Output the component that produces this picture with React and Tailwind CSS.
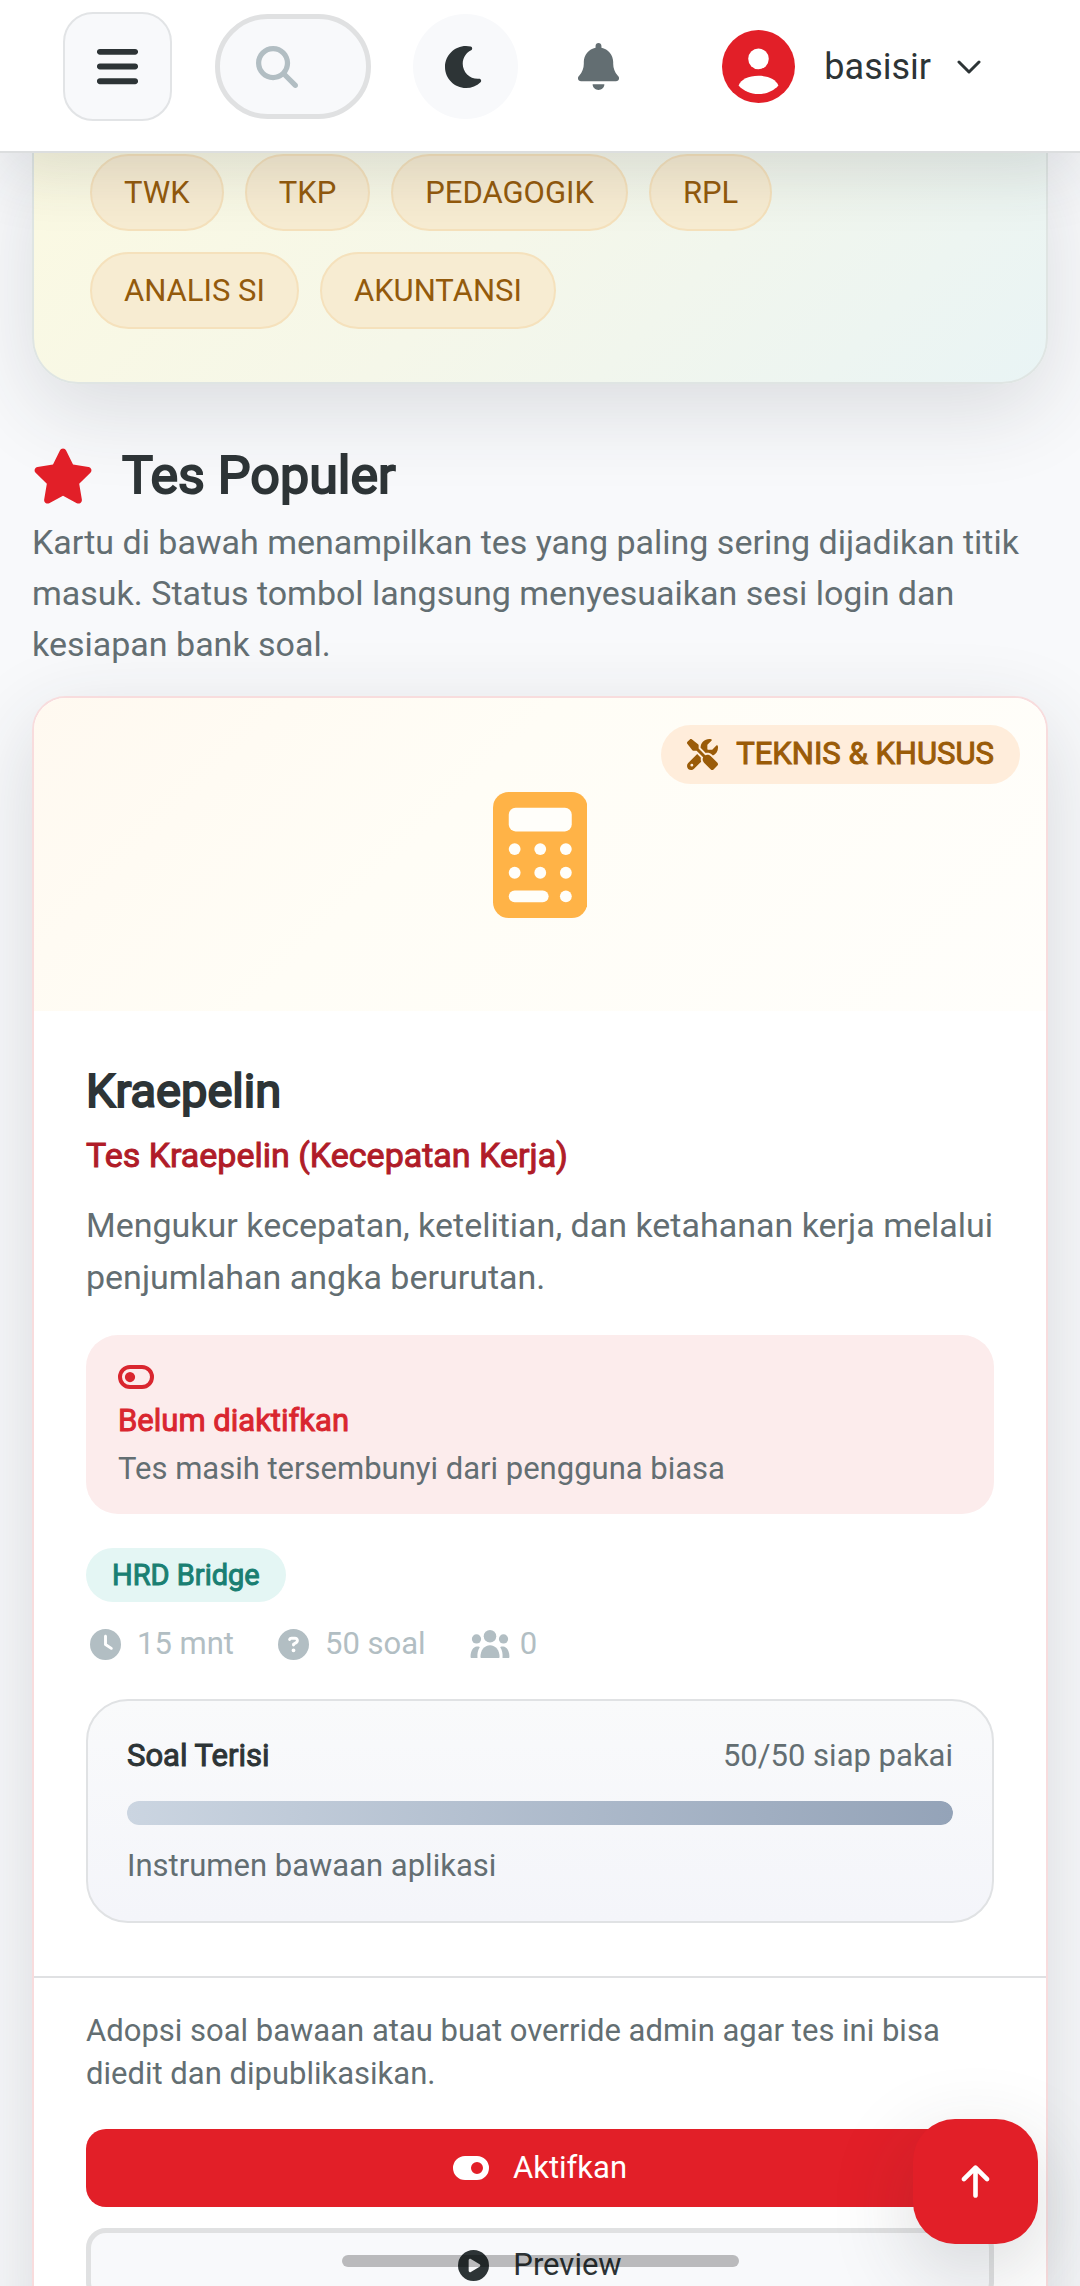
import React, { useRef, useState } from "react";
import {
  FaArrowUp,
  FaBars,
  FaBell,
  FaCirclePlay,
  FaCircleQuestion,
  FaClock,
  FaMagnifyingGlass,
  FaScrewdriverWrench,
  FaStar,
} from "react-icons/fa6";

const CATEGORIES = ["TWK", "TKP", "PEDAGOGIK", "RPL", "ANALIS SI", "AKUNTANSI"];

const TEST = {
  name: "Kraepelin",
  subtitle: "Tes Kraepelin (Kecepatan Kerja)",
  description:
    "Mengukur kecepatan, ketelitian, dan ketahanan kerja melalui penjumlahan angka berurutan.",
  category: "TEKNIS & KHUSUS",
  bridge: "HRD Bridge",
  minutes: 15,
  questions: 50,
  ready: 50,
  users: 0,
};

const MoonIcon = ({ className }) => (
  <svg className={className} viewBox="0 0 512 512" fill="currentColor">
    <path d="M256 0C114.6 0 0 114.6 0 256S114.6 512 256 512c68.8 0 131.3-27.2 177.3-71.4 7.3-7 9.4-17.9 5.3-27.1s-13.7-14.9-23.8-14.1c-4.9 .4-9.8 .6-14.8 .6-101.6 0-184-82.4-184-184 0-72.1 41.5-134.6 102.1-164.8 9.1-4.5 14.3-14.3 13.1-24.4S322.6 8.5 312.7 6.3C294.4 2.2 275.4 0 256 0z" />
  </svg>
);

const AvatarIcon = ({ className }) => (
  <svg className={className} viewBox="0 0 220 220">
    <circle cx="110" cy="110" r="110" fill="currentColor" />
    <circle cx="110" cy="87" r="31" fill="#fff" />
    <path
      d="M50 167c8-18 29-29 60-29s52 11 60 29c-14 16-36 26-60 26s-46-10-60-26z"
      fill="#fff"
    />
  </svg>
);

const CalculatorIcon = ({ className }) => (
  <svg className={className} viewBox="0 0 384 512">
    <rect width="384" height="512" rx="64" fill="currentColor" />
    <g fill="#fffefa">
      <rect x="64" y="64" width="256" height="96" rx="28" />
      <circle cx="88" cy="232" r="24" />
      <circle cx="192" cy="232" r="24" />
      <circle cx="296" cy="232" r="24" />
      <circle cx="88" cy="328" r="24" />
      <circle cx="192" cy="328" r="24" />
      <circle cx="296" cy="328" r="24" />
      <rect x="64" y="400" width="162" height="48" rx="24" />
      <circle cx="296" cy="424" r="24" />
    </g>
  </svg>
);

const ToggleOffIcon = ({ className }) => (
  <svg className={className} viewBox="0 0 576 384">
    <rect
      x="32"
      y="32"
      width="512"
      height="320"
      rx="160"
      fill="none"
      stroke="currentColor"
      strokeWidth="64"
    />
    <circle cx="192" cy="192" r="82" fill="currentColor" />
  </svg>
);

const ToggleOnIcon = ({ className }) => (
  <svg className={className} viewBox="0 0 576 384" fill="currentColor">
    <path
      fillRule="evenodd"
      d="M192 0h192a192 192 0 0 1 0 384H192a192 192 0 0 1 0-384zM384 96a96 96 0 1 0 0 192 96 96 0 0 0 0-192z"
    />
  </svg>
);

const UsersIcon = ({ className }) => (
  <svg className={className} viewBox="0 0 118 85" fill="currentColor">
    <circle cx="59" cy="19" r="19" />
    <circle cx="18" cy="27" r="14" />
    <circle cx="100" cy="27" r="14" />
    <path d="M30 81c0-20 12-35 29-35s29 15 29 35c0 2-1 4-3 4H33c-2 0-3-2-3-4z" />
    <path d="M0 81c0-18 8-30 19-31 4 0 7 0 9 2-6 8-8 19-7 33H3c-2 0-3-2-3-4z" />
    <path d="M118 81c0-18-8-30-19-31-4 0-7 0-9 2 6 8 8 19 7 33h18c2 0 3-2 3-4z" />
  </svg>
);

const Header = () => {
  const [query, setQuery] = useState("");

  return (
    <header className="relative z-10 flex items-center border-b-2 border-[#dcdedf] bg-white pt-3 pr-[99px] pb-[30px] pl-[63px] shadow-[0_20px_64px_rgba(45,52,54,0.14)]">
      <button
        aria-label="Menu"
        className="flex size-[109px] shrink-0 items-center justify-center rounded-[30px] border-2 border-[#e2e4e6] bg-[#f8f9fb]"
      >
        <FaBars className="size-[47px]" />
      </button>
      <label className="ml-[43px] flex h-[105px] min-w-0 flex-1 items-center rounded-full border-[5px] border-[#e0e1e2] bg-[#f8f9fb] pr-4 pl-9">
        <FaMagnifyingGlass className="size-[42px] shrink-0 text-[#b2bec3]" />
        <input
          type="search"
          aria-label="Cari"
          value={query}
          onChange={(e) => setQuery(e.target.value)}
          className="w-0 min-w-0 flex-1 bg-transparent outline-none"
        />
      </label>
      <button
        aria-label="Mode gelap"
        className="ml-[42px] flex size-[105px] shrink-0 items-center justify-center rounded-full bg-[#f8f9fb]"
      >
        <MoonIcon className="size-[42px]" />
      </button>
      <button
        aria-label="Notifikasi"
        className="ml-7 flex size-[105px] shrink-0 items-center justify-center rounded-full text-[#636e72]"
      >
        <FaBell className="size-[47px]" />
      </button>
      <button className="ml-[71px] flex items-center text-[36px]">
        <AvatarIcon className="size-[73px] text-[#e21f28]" />
        <span className="ml-[29px]">basisir</span>
        <svg
          className="ml-[26px] h-4 w-6"
          viewBox="0 0 24 16"
          fill="none"
          stroke="currentColor"
          strokeWidth="3"
          strokeLinecap="round"
          strokeLinejoin="round"
        >
          <path d="M2 3l10 10L22 3" />
        </svg>
      </button>
    </header>
  );
};

const CategoryPanel = () => (
  <section className="flex flex-wrap gap-[21px] rounded-b-[46px] border-2 border-t-0 border-[#dfe5e3] bg-linear-[135deg,#fbf9e2,#f5f7e9_45%,#e9f4f5] px-14 pt-px pb-[53px] shadow-[0_26px_84px_rgba(45,52,54,0.14)]">
    {CATEGORIES.map((category) => (
      <a
        key={category}
        href="#tes"
        className="rounded-full border-2 border-[#f5e1bc] bg-[#f7ecd2] px-8 py-4 text-[31px] leading-[41px] text-[#935a0c]"
      >
        {category}
      </a>
    ))}
  </section>
);

const QuestionProgress = ({ ready, total }) => (
  <div className="mt-[34px] rounded-[42px] border-2 border-[#e0e2e4] bg-linear-to-b from-[#f9fafb] to-[#f4f5fa] px-[39px] py-[34px] text-[31px] leading-[42px] text-[#636e72]">
    <div className="flex justify-between">
      <span className="text-[#2d3436] [-webkit-text-stroke:1px_currentColor]">
        Soal Terisi
      </span>
      <span>
        {ready}/{total} siap pakai
      </span>
    </div>
    <div className="mt-6 mb-5 h-6 overflow-hidden rounded-full bg-[#e5e9ee]">
      <div
        className="h-full rounded-full bg-linear-to-r from-[#cbd5e1] to-[#94a3b8]"
        style={{ width: `${(ready / total) * 100}%` }}
      />
    </div>
    <p>Instrumen bawaan aplikasi</p>
  </div>
);

const TestCard = ({ test }) => (
  <article
    id="tes"
    className="mt-[26px] overflow-hidden rounded-[34px] border-2 border-[#f8dcdd] bg-white shadow-[0_26px_84px_rgba(45,52,54,0.16)]"
  >
    <div className="relative flex h-[313px] items-center justify-center bg-linear-[135deg,#fff9f0,#fffdf6_40%,#fffefb]">
      <CalculatorIcon className="h-[126px] text-[#ffb347]" />
      <span className="absolute top-[27px] right-[26px] flex h-[59px] items-center gap-[18px] rounded-full bg-[#ffeddb] px-[26px] text-[31px] text-[#9a5b08] [-webkit-text-stroke:1px_currentColor]">
        <FaScrewdriverWrench className="size-[31px] [stroke-width:0]" />
        {test.category}
      </span>
    </div>
    <div className="px-[52px] pt-[51px] pb-[53px]">
      <h3 className="text-[47px] leading-[58px] [-webkit-text-stroke:2px_currentColor]">
        {test.name}
      </h3>
      <p className="mt-[10px] text-[34px] leading-[51px] text-[#b01c28] [-webkit-text-stroke:1px_currentColor]">
        {test.subtitle}
      </p>
      <p className="mt-[18px] text-[34px] leading-[52px] text-[#636e72]">
        {test.description}
      </p>
      <div className="mt-8 flex flex-col rounded-[32px] bg-[#fcecec] px-8 pt-[30px] pb-[21px] text-[31px] leading-[48px]">
        <ToggleOffIcon className="h-6 w-9 text-[#d9262f]" />
        <span className="mt-2 text-[#d9262f] [-webkit-text-stroke:1px_currentColor]">
          Belum diaktifkan
        </span>
        <span className="text-[#636e72]">
          Tes masih tersembunyi dari pengguna biasa
        </span>
      </div>
      <div className="mt-[34px] w-fit rounded-full bg-[#e4f6f4] px-[26px] text-[29px] leading-[54px] text-[#1a7f72] [-webkit-text-stroke:1px_currentColor]">
        {test.bridge}
      </div>
      <div className="mt-[21px] flex items-center gap-11 text-[31px] leading-[42px] text-[#b2bec3]">
        <span className="flex items-center gap-4 pl-1">
          <FaClock className="size-[31px]" />
          {test.minutes} mnt
        </span>
        <span className="flex items-center gap-4">
          <FaCircleQuestion className="size-[31px]" />
          {test.questions} soal
        </span>
        <span className="flex items-center gap-[10px]">
          <UsersIcon className="h-7 w-10" />
          {test.users}
        </span>
      </div>
      <QuestionProgress ready={test.ready} total={test.questions} />
    </div>
    <div className="border-t-2 border-[#e0e1e3] px-[52px] pt-[31px] pb-12">
      <p className="text-[31px] leading-[43px] text-[#636e72]">
        Adopsi soal bawaan atau buat override admin agar tes ini bisa diedit dan
        dipublikasikan.
      </p>
      <button className="mt-[34px] flex h-[78px] w-full items-center justify-center gap-6 rounded-[20px] bg-[#e21f28] text-[31px] text-white">
        <ToggleOnIcon className="h-6 w-9" />
        Aktifkan
      </button>
      <button className="mt-[21px] flex h-[74px] w-full items-center justify-center gap-6 rounded-[20px] border-[5px] border-[#e0e1e2] bg-[#f8f9fb] text-[31px]">
        <FaCirclePlay className="size-[31px]" />
        Preview
      </button>
    </div>
  </article>
);

export default function App() {
  const mainRef = useRef(null);

  return (
    <div className="relative flex h-screen flex-col overflow-hidden bg-[#f8f9fb] font-[Roboto,sans-serif] text-[#2d3436]">
      <Header />
      <main ref={mainRef} className="min-h-0 flex-1 overflow-hidden px-8">
        <CategoryPanel />
        <h2 className="mt-[59px] flex items-center gap-7 text-[52px] leading-[66px] [-webkit-text-stroke:2px_currentColor]">
          <FaStar className="size-[62px] text-[#e21f28] [stroke-width:0]" />
          Tes Populer
        </h2>
        <p className="mt-2 text-[34px] leading-[51px] text-[#636e72]">
          Kartu di bawah menampilkan tes yang paling sering dijadikan titik
          masuk. Status tombol langsung menyesuaikan sesi login dan kesiapan
          bank soal.
        </p>
        <TestCard test={TEST} />
      </main>
      <button
        aria-label="Kembali ke atas"
        onClick={() => mainRef.current.scrollTo({ top: 0, behavior: "smooth" })}
        className="absolute right-[42px] bottom-[42px] flex size-[125px] items-center justify-center rounded-[42px] bg-[#e21f28] text-white shadow-[0_26px_84px_rgba(45,52,54,0.18)]"
      >
        <FaArrowUp className="size-[37px]" />
      </button>
      {/* gesture bar */}
      <div className="pointer-events-none absolute inset-x-0 bottom-[19px] mx-auto h-3 w-[397px] rounded-full bg-black/25" />
    </div>
  );
}
